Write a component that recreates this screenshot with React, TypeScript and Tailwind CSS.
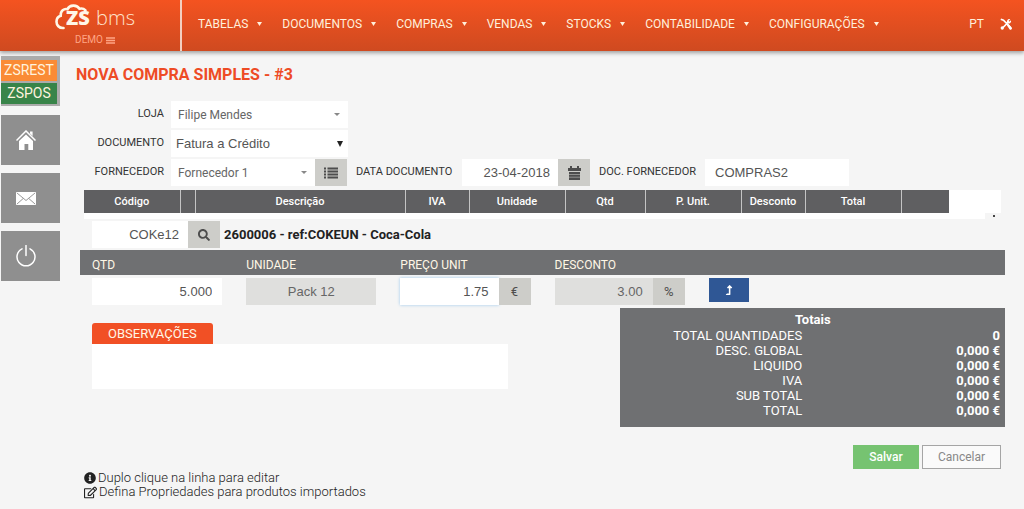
import type { ReactNode } from "react";
import { FaInfoCircle, FaLevelUpAlt, FaRegEdit, FaSearch } from "react-icons/fa";

const menu = ["TABELAS", "DOCUMENTOS", "COMPRAS", "VENDAS", "STOCKS", "CONTABILIDADE", "CONFIGURAÇÕES"];

const columns = [
  { label: "Código", width: "w-24" },
  { label: "", width: "w-[15px]" },
  { label: "Descrição", width: "" },
  { label: "IVA", width: "w-16" },
  { label: "Unidade", width: "w-24" },
  { label: "Qtd", width: "w-20" },
  { label: "P. Unit.", width: "w-24" },
  { label: "Desconto", width: "w-16" },
  { label: "Total", width: "w-24" },
  { label: "", width: "w-12" },
];

const totals = [
  ["TOTAL QUANTIDADES", "0"],
  ["DESC. GLOBAL", "0,000 €"],
  ["LIQUIDO", "0,000 €"],
  ["IVA", "0,000 €"],
  ["SUB TOTAL", "0,000 €"],
  ["TOTAL", "0,000 €"],
];

const field = "h-[27px] min-w-0 bg-white font-['Liberation_Sans',sans-serif] text-[13px] text-[#555]";
const addon = "flex h-[27px] w-8 shrink-0 items-center justify-center bg-[#cdcdc9] text-[13px] text-[#4d4d4d]";
const rowLabel = "w-[84px] shrink-0 text-right text-[11px] text-[#333]";
const inlineLabel = "w-[99px] shrink-0 text-[11px] text-[#333]";

function Caret({ className }: { className: string }) {
  return (
    <svg viewBox="0 0 6 4" preserveAspectRatio="none" className={className} aria-hidden="true">
      <path d="M0 0h6L3 4z" fill="currentColor" />
    </svg>
  );
}

function ListIcon() {
  return (
    <svg viewBox="0 0 14 12" className="h-3 w-[14px]" aria-hidden="true">
      <path d="M0 1.500h2M0 4.500h2M0 7.500h2M0 10.500h2M3.500 1.500H14M3.500 4.500H14M3.500 7.500H14M3.500 10.500H14" stroke="currentColor" strokeWidth="1.800" />
    </svg>
  );
}

function CalendarIcon() {
  return (
    <svg viewBox="0 0 13 14" className="h-[14px] w-[13px]" aria-hidden="true">
      <path d="M0 2h2V0h2v2h5V0h2v2h2v3H0zM1 6h11v8H1z" fill="currentColor" />
      <path d="M1 8.500h11M1 11.200h11" stroke="#a5a5a2" strokeWidth=".8" />
    </svg>
  );
}

function Logo() {
  return (
    <a href="#" aria-label="ZS bms" className="flex w-[180px] shrink-0 flex-col items-center pt-1 pl-[10px]">
      <span className="relative flex h-7 w-20 items-end justify-between pl-[11px] font-['Open_Sans',sans-serif] text-[20px] leading-7 text-[#fff7e8]">
        <svg viewBox="0 0 36 28" className="absolute top-0 left-0 h-7 w-9" aria-hidden="true">
          <path
            d="M8.500 24C4 24.300 1.500 21 1.500 17.800c0-3 1.700-5.300 4.200-6C5.400 6.500 9 4.400 12.500 5.200 14.500.8 21.800.3 24.500 4.800c2-.6 4.500 0 6 1.600"
            fill="none"
            stroke="currentColor"
            strokeWidth="2.600"
            strokeLinecap="round"
          />
        </svg>
        <span className="font-extrabold">ZS</span>
        <span className="font-light text-[#ffe3cc]">bms</span>
      </span>
      <span className="flex items-center gap-[3px] text-[10px] leading-4 text-[#ffa585]">
        DEMO
        <svg viewBox="0 0 9 7" className="h-[7px] w-[9px]" aria-hidden="true">
          <path d="M0 1h9M0 3.500h9M0 6h9" stroke="currentColor" strokeWidth="1.600" />
        </svg>
      </span>
    </a>
  );
}

function SideButton({ label, children }: { label: string; children: ReactNode }) {
  return (
    <button type="button" aria-label={label} className="flex h-[50px] items-center bg-[#8f8f8f] pl-[15px] text-white">
      {children}
    </button>
  );
}

function Select({ id, value, className }: { id: string; value: string; className: string }) {
  return (
    <div className={`relative ${className}`}>
      <select id={id} className="h-[27px] w-full appearance-none bg-white pl-[7px] text-[12px] text-[#666]">
        <option>{value}</option>
      </select>
      <Caret className="pointer-events-none absolute top-3 right-2 h-[3px] w-[6px] text-[#888]" />
    </div>
  );
}

export default function App() {
  return (
    <div className="min-h-screen bg-[#f5f5f5] font-['Roboto',sans-serif] text-[13px] text-[#333]">
      <header className="flex h-[51px] bg-linear-to-b from-[#f45320] to-[#cf4a20] shadow-[0_2px_4px_rgba(0,0,0,0.35)]">
        <Logo />
        <nav className="flex flex-1 items-center border-l-2 border-[#f3cfc0] pr-3 pb-[3px] pl-4 text-[12px] text-[#fff0dc]">
          <ul className="flex gap-5">
            {menu.map((item) => (
              <li key={item}>
                <a href="#" className="flex items-center gap-[9px]">
                  {item}
                  <Caret className="h-1 w-[5px]" />
                </a>
              </li>
            ))}
          </ul>
          <a href="#" className="ml-auto">PT</a>
          <a href="#" aria-label="Ferramentas" className="ml-4">
            <svg viewBox="0 0 24 24" className="size-3" aria-hidden="true">
              <path d="M3 3l4 1.500L19.500 17.500M5 20L17 8" stroke="#fff" strokeWidth="3.500" strokeLinecap="round" fill="none" />
              <path d="M20.500 2.500L17 6l1.500 1.500L22 4.500a5 5 0 0 1-7 6 5 5 0 0 1 5.500-8z" fill="#fff" />
              <path d="M14 15l3-3 6 6.500a2.600 2.600 0 0 1-4 4z" fill="#fff" />
              <circle cx="4.500" cy="20" r="3.300" fill="#fff" />
            </svg>
          </a>
        </nav>
      </header>

      <div className="flex">
        <aside className="ml-px flex w-[59px] shrink-0 flex-col gap-2 pt-[5px]">
          <div className="mb-px flex flex-col gap-0.5 bg-[#ababab] pt-1 pr-[3px] pb-0.5 text-center text-[14px] leading-[21px] text-[#fff3df]">
            <a href="#" className="bg-[#fa8b35]">ZSREST</a>
            <a href="#" className="bg-[#388449]">ZSPOS</a>
          </div>
          <SideButton label="Início">
            <svg viewBox="0 0 20 20" className="size-5" aria-hidden="true">
              <path d="M3 11l7-6.500 7 6.500v9h-4.700v-6H8.500v6H3z" fill="#fff" />
              <path d="M.5 10.500L10 1l9.500 9.500" stroke="#fff" strokeWidth="1.500" fill="none" />
              <path d="M14 1.500h2.600V6L14 3.500z" fill="#fff" />
            </svg>
          </SideButton>
          <SideButton label="Mensagens">
            <svg viewBox="0 0 20 13" className="h-[13px] w-5" aria-hidden="true">
              <rect width="20" height="13" rx=".8" fill="#fff" />
              <path d="M1 1l9 7.500L19 1M1 12l6.200-5.500M19 12l-6.200-5.500" stroke="#999" strokeWidth="1" fill="none" />
            </svg>
          </SideButton>
          <SideButton label="Sair">
            <svg viewBox="0 0 20 22" className="h-[22px] w-5" aria-hidden="true">
              <path d="M6 3.800a9 9 0 1 0 8 0M10 .5v10" stroke="#fff" strokeWidth="1.500" fill="none" strokeLinecap="round" />
            </svg>
          </SideButton>
        </aside>

        <main className="min-w-0 flex-1 pr-[19px] pl-5">
          <h1 className="-ml-1 pt-3 text-[16px] leading-6 font-bold text-[#ee4b25]">NOVA COMPRA SIMPLES - #3</h1>

          <form>
            <div className="mt-[14px] flex flex-col gap-[2px]">
              <div className="flex items-center gap-[7px]">
                <label htmlFor="loja" className={rowLabel}>LOJA</label>
                <Select id="loja" value="Filipe Mendes" className="w-[177px]" />
              </div>
              <div className="flex items-center gap-[7px]">
                <label htmlFor="documento" className={rowLabel}>DOCUMENTO</label>
                <div className="relative w-[177px]">
                  <select id="documento" className={`${field} w-full appearance-none pl-[5px]`}>
                    <option>Fatura a Crédito</option>
                  </select>
                  <Caret className="pointer-events-none absolute top-[11px] right-[5px] h-[6px] w-[6px] text-[#222]" />
                </div>
              </div>
              <div className="flex items-center gap-[7px]">
                <label htmlFor="fornecedor" className={rowLabel}>FORNECEDOR</label>
                <div className="flex">
                  <Select id="fornecedor" value="Fornecedor 1" className="w-36" />
                  <button type="button" aria-label="Lista de fornecedores" className={addon}><ListIcon /></button>
                </div>
                <label htmlFor="data" className={`${inlineLabel} ml-0.5`}>DATA DOCUMENTO</label>
                <div className="flex">
                  <input id="data" defaultValue="23-04-2018" className={`${field} w-24 pr-2 text-right`} />
                  <button type="button" aria-label="Calendário" className={addon}><CalendarIcon /></button>
                </div>
                <label htmlFor="doc" className={`${inlineLabel} ml-0.5`}>DOC. FORNECEDOR</label>
                <input id="doc" defaultValue="COMPRAS2" className={`${field} w-36 pl-[10px]`} />
              </div>
            </div>

            <div className="relative mx-1 mt-1">
              <div className="bg-white pr-[52px]">
                <table className="w-full table-fixed border-collapse bg-[#5f5f61] text-[11px] leading-[23px] text-white">
                  <thead>
                    <tr>
                      {columns.map((c, i) => (
                        <th key={i} className={`${c.width} h-[23px] border-l border-[#c4c4c4] p-0 font-medium first:border-l-0`}>
                          {c.label}
                        </th>
                      ))}
                    </tr>
                  </thead>
                </table>
              </div>
              <div className="mr-4 h-[6px] bg-white" />
              <span className="absolute right-[6px] bottom-[2px] size-0.5 bg-[#444]" />
            </div>

            <div className="mt-[2px] mb-[2px] ml-3 flex items-center">
              <input aria-label="Código" defaultValue="COKe12" className={`${field} w-24 pr-[9px] text-right`} />
              <button type="button" aria-label="Pesquisar" className={addon}><FaSearch className="text-[12px]" /></button>
              <strong className="ml-1 text-[13px] font-bold text-[#222]">2600006 - ref:COKEUN - Coca-Cola</strong>
            </div>

            <div className="grid h-[25px] grid-cols-6 items-center bg-[#6f7072] pt-1 text-[12px] text-[#fff7e6]">
              <label htmlFor="qtd" className="px-3">QTD</label>
              <label htmlFor="unidade" className="px-3">UNIDADE</label>
              <label htmlFor="preco" className="px-3">PREÇO UNIT</label>
              <label htmlFor="desconto" className="px-3">DESCONTO</label>
            </div>
            <div className="grid grid-cols-6 pt-[3px]">
              <div className="flex px-3">
                <input id="qtd" defaultValue="5.000" className={`${field} w-full pr-[10px] text-right`} />
              </div>
              <div className="flex px-3">
                <input id="unidade" readOnly defaultValue="Pack 12" className="h-[27px] w-full min-w-0 bg-[#dfdfdd] text-center font-['Liberation_Sans',sans-serif] text-[13px] text-[#666]" />
              </div>
              <div className="flex px-3">
                <input id="preco" defaultValue="1.75" className={`${field} flex-1 pr-[10px] text-right shadow-[0_0_3px_#9cc8ec]`} />
                <span className={addon}>€</span>
              </div>
              <div className="flex px-3">
                <input id="desconto" readOnly defaultValue="3.00" className="h-[27px] min-w-0 flex-1 bg-[#dfdfdd] pr-[10px] text-right font-['Liberation_Sans',sans-serif] text-[13px] text-[#666]" />
                <span className={addon}>%</span>
              </div>
              <div className="px-3">
                <button type="button" aria-label="Inserir linha" className="flex h-6 w-10 items-center justify-center bg-[#2f5795] text-[10px] text-white">
                  <FaLevelUpAlt />
                </button>
              </div>
            </div>

            <div className="mt-[3px] flex items-start justify-between">
              <div className="ml-3 flex w-[45%] flex-col items-start pt-[15px]">
                <label htmlFor="obs" className="rounded-t-[3px] bg-[#f15025] px-4 text-[13px] leading-[21px] text-[#fff7e6]">OBSERVAÇÕES</label>
                <textarea id="obs" className="h-[45px] w-full resize-none bg-white" />
              </div>
              <section className="w-5/12 bg-[#6f7072] pt-1 pr-[5px] pb-[9px] text-white">
                <table className="w-full text-right text-[13px] leading-[15px]">
                  <caption className="pl-[6px] text-center leading-4 font-bold">Totais</caption>
                  <tbody>
                    {totals.map(([label, value]) => (
                      <tr key={label}>
                        <th scope="row" className="w-[48%] p-0 text-right font-normal">{label}</th>
                        <td className="p-0 font-bold">{value}</td>
                      </tr>
                    ))}
                  </tbody>
                </table>
              </section>
            </div>

            <div className="mt-[18px] mr-1 flex justify-end gap-[3px] text-[12px]">
              <button type="submit" className="h-6 w-[66px] bg-[#76c371] font-medium text-white">Salvar</button>
              <button type="button" className="h-6 w-[79px] border border-[#a5a5a5] bg-[#fafafa] text-[#888]">Cancelar</button>
            </div>
          </form>

          <div className="mt-[2px] ml-1 text-[13px] leading-[14px] font-light text-[#222]">
            <p className="flex items-center gap-0.5"><FaInfoCircle className="text-[12px]" />Duplo clique na linha para editar</p>
            <p className="flex items-center gap-0.5"><FaRegEdit className="text-[13px]" />Defina Propriedades para produtos importados</p>
          </div>
        </main>
      </div>
    </div>
  );
}
